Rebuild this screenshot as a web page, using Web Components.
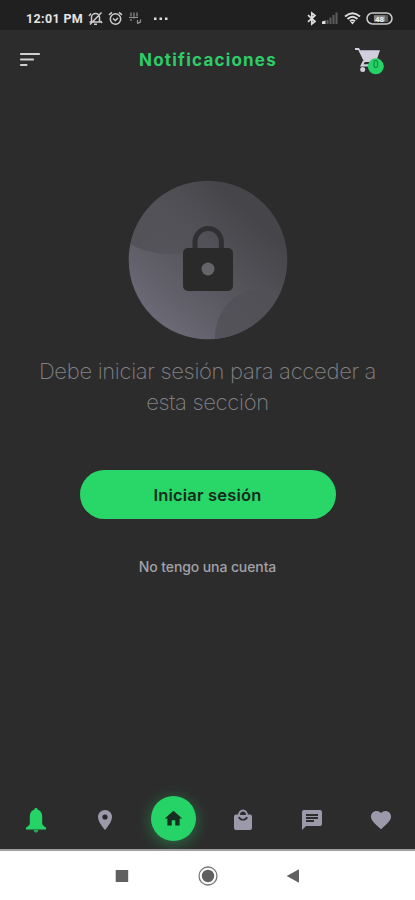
<!DOCTYPE html>
<html lang="es">
<head>
<meta charset="utf-8">
<title>Notificaciones</title>
<style>html,body{margin:0;height:100%;background:#2c2c2c;overflow:hidden}</style>
</head>
<body>
<phone-app></phone-app>
<script>
const define = (name, html) => customElements.define(name, class extends HTMLElement {
  constructor() {
    super();
    const t = document.createElement('template');
    t.innerHTML = '<style>*{box-sizing:border-box}svg{display:block;flex:none}</style>' + html;
    this.attachShadow({ mode: 'open' }).append(t.content.cloneNode(true));
  }
});

define('status-bar', `
<style>
:host{display:flex;align-items:center;height:30px;padding:7px 22px 0 26px;background:#202020;color:#e4e4e4}
.time{font:700 12.5px/16px Roboto,sans-serif;width:62px;white-space:nowrap;letter-spacing:.35px}
.sp{flex:1}
</style>
<span class="time">12:01 PM</span>
<svg width="15" height="15" viewBox="0 0 15 15" fill="none" stroke="#ccc" stroke-width="1.500"><path d="M3.500 11V6.500a4 4 0 0 1 8 0V11zM1.500 11h12M6 13.200h3M2 13.500L13.500 1.500M1 5l2-2.500M12.500 10l1.500 2"/></svg>
<svg style="margin-left:5px" width="15" height="15" viewBox="0 0 15 15" fill="none" stroke="#ccc" stroke-width="1.500"><circle cx="7.500" cy="8" r="5.200"/><path d="M1 3.800L4 1.300M14 3.800L11 1.300M5 7.500l2.300 2L10 7"/></svg>
<svg style="margin-left:5px" width="15" height="15" viewBox="0 0 15 15" fill="none" stroke="#909090" stroke-width="1.200"><path d="M3 1.500v4M6 1.500v6M9 1.500v4M1 6.500h9M3 8v2M9.500 9v2.500h3.200M12.500 8.500q1 3-3.500 4"/></svg>
<svg style="margin-left:10px" width="18" height="15" viewBox="0 0 18 15" fill="#ddd"><rect x="1" y="6.500" width="2.500" height="2.500"/><rect x="6.500" y="6.500" width="2.500" height="2.500"/><rect x="12" y="6.500" width="2.500" height="2.500"/></svg>
<span class="sp"></span>
<svg width="10" height="15" viewBox="0 0 10 15" fill="none" stroke="#ddd" stroke-width="1.700"><path d="M1 4.200L8 10.500L4.800 13V2L8 4.500L1 10.800"/></svg>
<svg style="margin-left:5px" width="17" height="15" viewBox="0 0 17 15"><path fill="#ddd" d="M0 13V10.500L3.500 9.500V13z"/><path fill="#5c5c5c" d="M4.500 9h2v4h-2zM7.500 6.500h2V13h-2zM10.500 4h2v9h-2zM13.500 1.500h2V13h-2z"/></svg>
<svg style="margin-left:5px" width="17" height="15" viewBox="0 0 17 15" fill="none" stroke="#ddd" stroke-width="1.900"><path d="M1 5.500Q8.500-1 16 5.500M3.500 8Q8.500 3.500 13.500 8M6 10.300Q8.500 8 11 10.300"/><path fill="#ddd" stroke="none" d="M6.500 11h4l-2 2.500z"/></svg>
<svg style="margin-left:5px" width="27" height="15" viewBox="0 0 27 15"><rect x="1" y="2" width="25" height="11" rx="5.500" fill="none" stroke="#ccc" stroke-width="1.500"/><rect x="8" y="4.200" width="11" height="6.600" fill="#888"/><rect x="19" y="4.200" width="3" height="6.600" fill="#606060"/><text x="13.500" y="10.500" text-anchor="middle" font-family="Roboto" font-weight="700" font-size="8" fill="#f0f0f0">48</text></svg>`);

define('app-header', `
<style>
:host{display:grid;grid-template-columns:60px 1fr 60px;align-items:center;height:60px}
.menu{margin-left:19px}
h1{margin:0;text-align:center;font:700 17px/24px Inter,sans-serif;letter-spacing:1.200px;color:#2dcc68;white-space:nowrap;padding-left:1px}
</style>
<svg class="menu" width="22" height="16" viewBox="0 0 22 16" fill="none" stroke="#d0d0d4" stroke-width="2.200" stroke-linecap="round"><path d="M2 2h18M2 7.500h12M2 13h5.500"/></svg>
<h1><slot></slot></h1>
<svg width="30" height="30" viewBox="0 0 30 30"><path d="M0 3h4l1.200 2.300H25L21 17H9.200L3.200 5H0z" fill="#d2cfdd"/><path d="M9 16l-2.200 4.300H18" fill="none" stroke="#d2cfdd" stroke-width="2.200"/><circle cx="7.700" cy="24.500" r="2.500" fill="#d2cfdd"/><circle cx="20.800" cy="21.300" r="8" fill="#25d366"/><text x="20.800" y="22.800" text-anchor="middle" font-family="Roboto" font-size="10" fill="#167a3b">0</text></svg>`);

define('lock-badge', `
<style>:host{display:block;width:160px;height:160px}</style>
<svg width="160" height="160" viewBox="0 0 160 160">
<defs><linearGradient id="g" x1=".15" y1=".85" x2=".75" y2=".2"><stop offset="0" stop-color="#6a6975"/><stop offset=".5" stop-color="#57565d"/><stop offset="1" stop-color="#464549"/></linearGradient>
<linearGradient id="s" gradientUnits="userSpaceOnUse" x1="10" y1="70" x2="95" y2="35"><stop offset="0" stop-color="#505056"/><stop offset="1" stop-color="#505056" stop-opacity="0"/></linearGradient>
<clipPath id="c"><circle cx="80" cy="80" r="79.300"/></clipPath></defs>
<g clip-path="url(#c)"><rect width="160" height="160" fill="url(#g)"/>
<ellipse cx="42" cy="28" rx="64" ry="46" fill="url(#s)" opacity=".85"/>
<circle cx="136" cy="157" r="49" fill="#515056" opacity=".8"/></g>
<path d="M67 72V62a13.200 13.500 0 0 1 26.400 0v10" fill="none" stroke="#303032" stroke-width="5"/>
<rect x="55" y="68" width="50" height="43" rx="5" fill="#2a2a2b"/>
<circle cx="80" cy="89" r="6.500" fill="#656468"/>
</svg>`);

define('pill-button', `
<style>
:host{display:block}
button{display:block;width:256px;height:49px;border:0;border-radius:25px;padding:0;background:#28d768;color:#152b1c;font:600 16.500px/24px Inter,sans-serif;letter-spacing:.17px}
</style><button><slot></slot></button>`);

define('sign-in-panel', `
<style>
:host{display:flex;flex-direction:column;align-items:center;padding-top:90px;flex:1}
p{margin:16px 0 0;width:360px;text-align:center;font:200 22px/31px Inter,sans-serif;letter-spacing:-.31px;color:#828286}
pill-button{margin-top:52px}
a{margin-top:38px;font:500 14px/20px Inter,sans-serif;letter-spacing:-.1px;color:#a2a1a8;white-space:nowrap}
</style>
<lock-badge></lock-badge>
<p>Debe iniciar sesión para acceder a esta sección</p>
<pill-button>Iniciar sesión</pill-button>
<a>No tengo una cuenta</a>`);

define('tab-bar', `
<style>
:host{display:grid;grid-template-columns:repeat(6,1fr);align-items:center;justify-items:center;height:62px;padding:4px 0 0 1px}
.home{display:grid;place-items:center;width:45px;height:45px;margin-top:-4px;border-radius:50%;background:#25d366;box-shadow:0 3px 16px rgba(37,211,102,.42)}
</style>
<svg width="24" height="28" viewBox="0 0 24 28" fill="#25d366"><path d="M12 2c1 0 1.600.7 1.600 1.600C16.500 4.500 18.200 7 18.200 10.500v6.700q0 2.500 3.800 4.300V23.500H2v-2q3.800-1.800 3.800-4.300v-6.700C5.800 7 7.500 4.500 10.400 3.600 10.400 2.700 11 2 12 2z"/><path d="M9.500 24h5q-.5 2.700-2.500 2.700T9.500 24z" opacity=".75"/></svg>
<svg width="24" height="24" viewBox="0 0 24 24" fill="#9c9aaa"><path d="M12 2C8.130 2 5 5.130 5 9c0 5.250 7 13 7 13s7-7.750 7-13c0-3.870-3.130-7-7-7z"/><circle cx="12" cy="9" r="2.600" fill="#252529"/></svg>
<div class="home"><svg width="21" height="21" viewBox="0 0 24 24" fill="#192d20"><path d="M10 20v-6h4v6h5v-8h3L12 3 2 12h3v8z"/></svg></div>
<svg width="22" height="24" viewBox="0 0 22 24"><path fill="#9c9aaa" d="M4 6.500h14a2 2 0 0 1 2 2V20a2 2 0 0 1-2 2H4a2 2 0 0 1-2-2V8.500a2 2 0 0 1 2-2z"/><path d="M7 7.500a4 5 0 0 1 8 0" fill="none" stroke="#9c9aaa" stroke-width="2"/><path d="M8.200 7a2.800 2.800 0 0 1 5.600 0z" fill="#2c2c30"/><path d="M7 9a4.100 3.500 0 0 0 8 0" fill="none" stroke="#2c2c30" stroke-width="1.700"/></svg>
<svg width="24" height="24" viewBox="0 0 24 24" fill="#9c9aaa"><path d="M20 2H4c-1.100 0-1.990.9-1.990 2L2 22l4-4h14c1.100 0 2-.9 2-2V4c0-1.100-.9-2-2-2zM6 9h12v2H6V9zm8 5H6v-2h8v2zm4-6H6V6h12v2z"/></svg>
<svg width="24" height="24" viewBox="0 0 24 24" fill="#9c9aaa"><path d="M12 21.350l-1.450-1.320C5.400 15.360 2 12.280 2 8.500 2 5.420 4.420 3 7.500 3c1.740 0 3.410.81 4.500 2.090C13.090 3.810 14.760 3 16.500 3 19.580 3 22 5.420 22 8.500c0 3.780-3.400 6.860-8.550 11.540L12 21.350z"/></svg>`);

define('system-nav', `
<style>:host{display:flex;box-sizing:border-box;justify-content:center;align-items:center;gap:64px;height:51px;border-top:2px solid #a0a0a0;background:#fff}</style>
<svg width="22" height="22" viewBox="0 0 22 22"><rect x="4.700" y="5" width="12.500" height="12" fill="#606060"/></svg>
<svg width="22" height="22" viewBox="0 0 22 22"><circle cx="11" cy="11" r="9" fill="none" stroke="#777" stroke-width="1.300"/><circle cx="11" cy="11" r="6.200" fill="#606060"/></svg>
<svg width="22" height="22" viewBox="0 0 22 22"><path d="M16 4.300v13.500L3.700 11z" fill="#606060"/></svg>`);

define('phone-app', `
<style>:host{display:flex;flex-direction:column;width:415px;height:900px;background:#2c2c2c}status-bar,tab-bar{box-sizing:border-box}</style>
<status-bar></status-bar>
<app-header>Notificaciones</app-header>
<sign-in-panel></sign-in-panel>
<tab-bar></tab-bar>
<system-nav></system-nav>`);
</script>
</body>
</html>
